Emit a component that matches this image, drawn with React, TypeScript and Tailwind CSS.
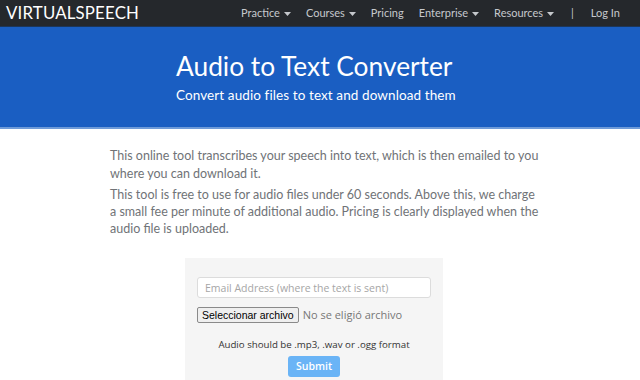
import { useState } from 'react'

const navItems = [
  { label: 'Practice', caret: true },
  { label: 'Courses', caret: true },
  { label: 'Pricing', caret: false },
  { label: 'Enterprise', caret: true },
  { label: 'Resources', caret: true },
]

function Caret() {
  return (
    <svg width="7" height="4" viewBox="0 0 7 4" className="ml-[4px] mt-[1px]">
      <path d="M0 0 L7 0 L3.5 4 Z" fill="currentColor" />
    </svg>
  )
}

export default function App() {
  const [email, setEmail] = useState('')

  return (
    <div className="min-h-[380px] bg-white font-['Lato',sans-serif]">
      {/* Navbar */}
      <nav className="h-[27px] bg-[#25282c] border-b border-[#1d3658] flex items-center pl-[6px] pr-[20px]">
        <span className="text-[16.8px] text-white tracking-[0.2px] leading-none">VIRTUALSPEECH</span>
        <div className="ml-auto flex items-center text-[11px] text-[#c5c8cc]">
          {navItems.map((item) => (
            <span key={item.label} className="flex items-center mr-[15px]">
              {item.label}
              {item.caret && <Caret />}
            </span>
          ))}
          <span className="ml-[2px] mr-[17px]">|</span>
          <span>Log In</span>
        </div>
      </nav>

      {/* Header */}
      <header className="h-[102px] bg-[#1a5ec2] border-b-2 border-b-[#6f9bd8] flex flex-col items-start pl-[176px] pt-[22px]">
        <h1 className="text-[26.3px] leading-[34px] text-white font-normal">Audio to Text Converter</h1>
        <p className="mt-[3px] text-[13.5px] text-white font-normal leading-[18px] tracking-[0.1px]">
          Convert audio files to text and download them
        </p>
      </header>

      {/* Content */}
      <main className="w-[430px] ml-[110px] pt-[18px] text-[12.5px] leading-[17.5px] text-[#707377]">
        <p className="mb-[4px]">
          This online tool transcribes your speech into text, which is then emailed to you where you can download it.
        </p>
        <p className="leading-[17px]">
          This tool is free to use for audio files under 60 seconds. Above this, we charge a small fee per minute of
          additional audio. Pricing is clearly displayed when the audio file is uploaded.
        </p>
      </main>

      <form
        className="w-[258px] ml-[185px] mt-[21px] bg-[#f5f5f5] pt-[19px] px-[12px] pb-[10px] font-['Open_Sans',sans-serif]"
        onSubmit={(e) => e.preventDefault()}
      >
        <input
          type="email"
          value={email}
          onChange={(e) => setEmail(e.target.value)}
          placeholder="Email Address (where the text is sent)"
          className="block w-full h-[21px] bg-white border border-[#dcdcdc] rounded-[3px] px-[7px] text-[10.5px] text-[#444] placeholder:text-[#a6a6a6] outline-none"
        />
        <div className="mt-[9px] flex items-center">
          <span className="h-[16px] px-[4px] border border-[#8a8a8a] bg-[#efefef] rounded-[2px] text-[10.5px] leading-[14px] text-black font-['Liberation_Sans',sans-serif]">
            Seleccionar archivo
          </span>
          <span className="ml-[4px] text-[11px] text-[#777]">No se eligió archivo</span>
        </div>
        <p className="mt-[14px] text-center text-[9.7px] text-[#333] font-medium">
          Audio should be .mp3, .wav or .ogg format
        </p>
        <div className="mt-[4px] flex justify-center">
          <button
            type="submit"
            className="h-[21px] w-[52px] rounded-[3px] bg-[#6ab4f6] text-white text-[10.5px] font-semibold"
          >
            Submit
          </button>
        </div>
      </form>
    </div>
  )
}
